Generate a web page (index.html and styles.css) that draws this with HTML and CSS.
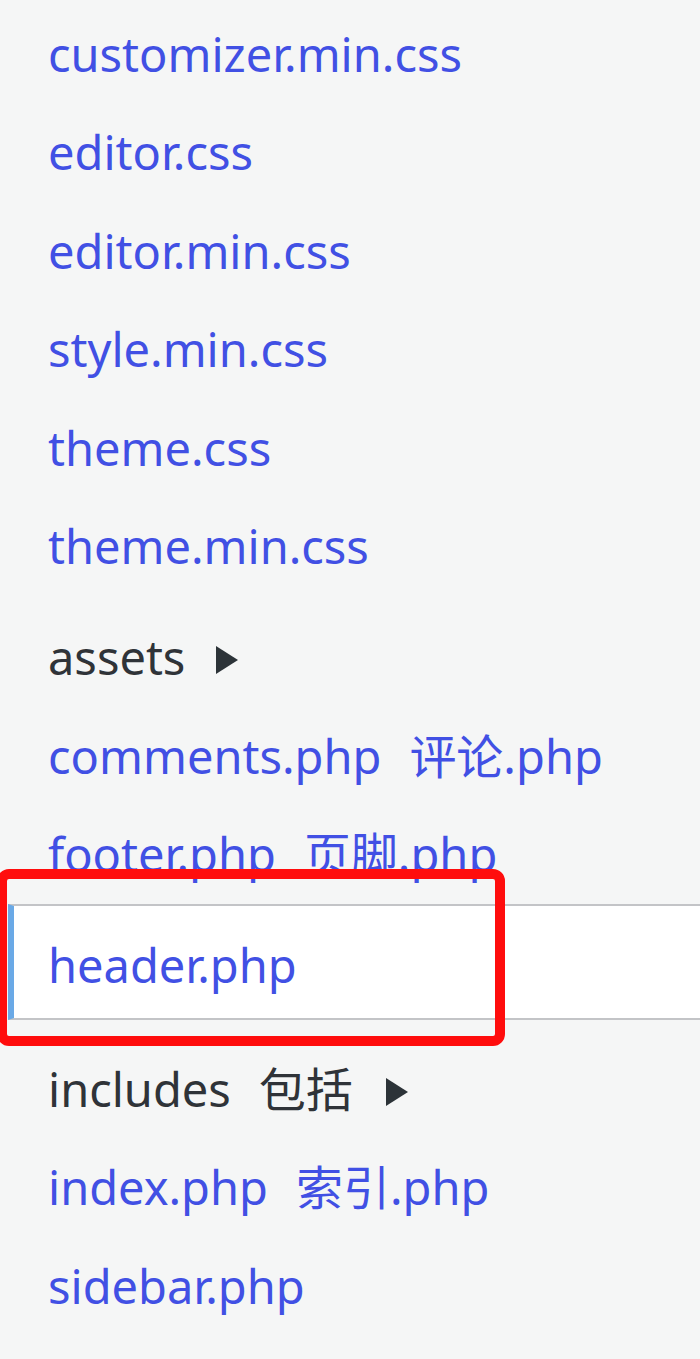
FILE: index.html
```html
<!DOCTYPE html>
<html lang="zh-CN">
<head>
  <meta charset="UTF-8" />
  <meta name="viewport" content="width=device-width, initial-scale=1.0" />
  <title>Theme Files</title>
  <link rel="stylesheet" href="styles.css">
</head>
<body>
  <ul class="file-list">
    <li><a href="#">customizer.min.css</a></li>
    <li><a href="#">editor.css</a></li>
    <li><a href="#">editor.min.css</a></li>
    <li><a href="#">style.min.css</a></li>
    <li><a href="#">theme.css</a></li>
    <li><a href="#">theme.min.css</a></li>
    <li class="folder first-folder">assets<span class="arrow"></span></li>
    <li><a href="#">comments.php<span class="trans">评论.php</span></a></li>
    <li><a href="#">footer.php<span class="trans">页脚.php</span></a></li>
    <li class="current">
      <a href="#">header.php</a>
      <span class="callout"></span>
    </li>
    <li class="folder after-current">includes<span class="trans">包括</span><span class="arrow"></span></li>
    <li><a href="#">index.php<span class="trans">索引.php</span></a></li>
    <li><a href="#">sidebar.php</a></li>
  </ul>
</body>
</html>
```

FILE: styles.css
```css
body {
  margin: 0;
  background-color: #f5f6f6;
  font-family: "Noto Sans", "Noto Sans CJK SC", sans-serif;
  overflow: hidden;
}
.file-list {
  list-style: none;
  margin: 0;
  padding: 5px 0 0 0;
  font-size: 47px;
  line-height: 98.4px;
}
.file-list li {
  padding-left: 48px;
  white-space: nowrap;
  color: #2f3338;
}
.file-list a {
  color: #4150e4;
  text-decoration: none;
}
.trans {
  margin-left: 28px;
}
.arrow {
  display: inline-block;
  width: 0;
  height: 0;
  margin-left: 31px;
  border-left: 22px solid #2c3338;
  border-top: 14px solid transparent;
  border-bottom: 14px solid transparent;
  vertical-align: 1px;
}
.folder .trans + .arrow {
  margin-left: 33px;
}
.first-folder {
  margin-top: 13px;
}
.current {
  position: relative;
  margin-left: 8px;
  padding: 10px 0 4px 34px !important;
  background-color: #fff;
  border-top: 2px solid #c3c4c7;
  border-bottom: 2px solid #c3c4c7;
  border-left: 6px solid #6aa9e6;
}
.callout {
  position: absolute;
  left: -17px;
  top: -37px;
  width: 508px;
  height: 177px;
  box-sizing: border-box;
  border: 10px solid #ff0d0d;
  border-radius: 12px;
}
.after-current {
  margin-top: 20px;
}
```
